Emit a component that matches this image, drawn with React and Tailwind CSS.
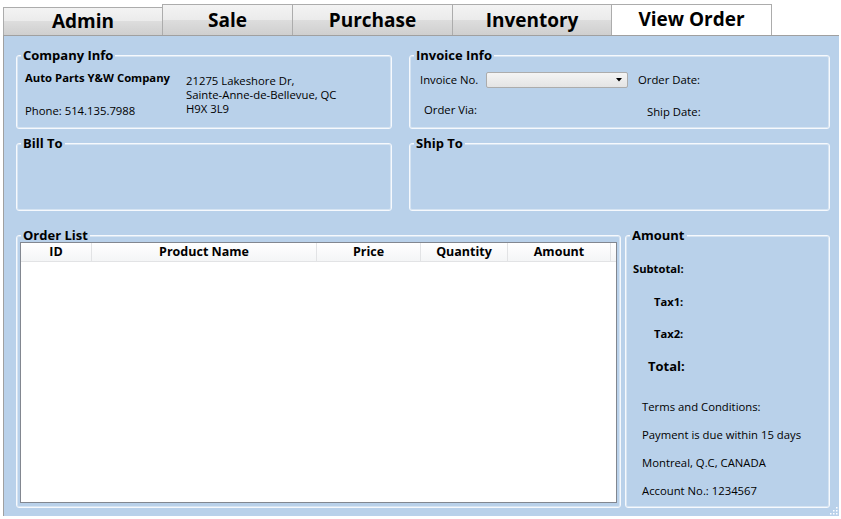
import React from 'react';

const tabs = [
  { label: 'Admin', w: 'w-[160px]', h: 'h-[28px]', first: true },
  { label: 'Sale', w: 'w-[131px]', h: 'h-[31px]' },
  { label: 'Purchase', w: 'w-[161px]', h: 'h-[31px]' },
  { label: 'Inventory', w: 'w-[160px]', h: 'h-[31px]' },
  { label: 'View Order', w: 'w-[161px]', h: 'h-[31px]', active: true },
];

const columns = [
  { label: 'ID', w: 'w-[71px]' },
  { label: 'Product Name', w: 'w-[225px]' },
  { label: 'Price', w: 'w-[104px]' },
  { label: 'Quantity', w: 'w-[87px]' },
  { label: 'Amount', w: 'w-[103px]' },
];

// WPF-ish group box: white double border with the header sitting on the top line
const GroupBox = ({ title, className = '', children }) => (
  <fieldset
    className={`min-w-0 border border-[#f6f9fd] rounded-[3px] shadow-[inset_0_0_0_1px_#d6e4f2] ${className}`}
  >
    <legend className="ml-[4px] px-[2px] bg-[#b9d1ea] text-[13px] font-bold leading-[14px] text-black">
      {title}
    </legend>
    {children}
  </fieldset>
);

export default function App() {
  return (
    <div className="w-[841px] h-[519px] bg-white overflow-hidden font-['Open_Sans',_'DejaVu_Sans',_sans-serif] text-black">
      {/* Tab strip */}
      <div className="flex items-end h-[35px] pl-[3px]">
        {tabs.map((t) => (
          <div
            key={t.label}
            className={`${t.w} ${t.h} ${t.first ? '' : '-ml-px'} flex items-center justify-center border border-b-0 border-[#acacac] text-[19px] font-bold leading-none ${
              t.active
                ? 'bg-white pb-[2px]'
                : 'bg-[linear-gradient(#f3f3f3_0%,#ebebeb_50%,#dddddd_50%,#cfcfcf_100%)]'
            }`}
          >
            {t.label}
          </div>
        ))}
      </div>

      {/* Tab content */}
      <div className="relative ml-[3px] w-[836px] h-[481px] bg-[#b9d1ea] border-t border-l border-[#a0a0a0] pl-[12px] pt-[12px]">
        {/* Row 1 */}
        <div className="flex gap-[17px]">
          <GroupBox title="Company Info" className="w-[376px] h-[81px]">
            <div className="flex pl-[8px] pt-[8px] text-[11.3px] leading-[15px]">
              <div className="w-[161px] flex flex-col">
                <span className="font-bold">Auto Parts Y&amp;W Company</span>
                <span className="mt-[18px]">Phone: 514.135.7988</span>
              </div>
              <div className="flex flex-col pt-[4px] leading-[14px]">
                <span>21275 Lakeshore Dr,</span>
                <span>Sainte-Anne-de-Bellevue, QC</span>
                <span>H9X 3L9</span>
              </div>
            </div>
          </GroupBox>

          <GroupBox title="Invoice Info" className="w-[421px] h-[81px]">
            <div className="pl-[10px] pt-[10px] text-[11.3px] leading-[16px]">
              <div className="flex items-center">
                <span className="w-[66px]">Invoice No.</span>
                <div className="relative w-[142px] h-[16px] border border-[#acacac] rounded-[2px] bg-[linear-gradient(#f4f4f4,#e4e4e4)]">
                  <svg className="absolute right-[5px] top-[5px]" width="6" height="4" viewBox="0 0 6 4">
                    <path d="M0 0 H6 L3 3.5 Z" fill="#000" />
                  </svg>
                </div>
                <span className="ml-[10px]">Order Date:</span>
              </div>
              <div className="flex items-start mt-[14px] pl-[4px]">
                <span className="w-[223px]">Order Via:</span>
                <span className="mt-[2px]">Ship Date:</span>
              </div>
            </div>
          </GroupBox>
        </div>

        {/* Row 2 */}
        <div className="flex gap-[17px] mt-[7px]">
          <GroupBox title="Bill To" className="w-[376px] h-[75px]" />
          <GroupBox title="Ship To" className="w-[421px] h-[75px]" />
        </div>

        {/* Row 3 */}
        <div className="flex gap-[4px] mt-[17px]">
          <GroupBox title="Order List" className="w-[605px] h-[280px]">
            <div className="px-[3px]">
              <div className="w-[597px] h-[261px] bg-white border border-[#828790]">
                <div className="flex h-[19px] bg-[linear-gradient(#ffffff,#f4f5f6)] border-b border-[#e2e3e5]">
                  {columns.map((c) => (
                    <div
                      key={c.label}
                      className={`${c.w} flex items-center justify-center border-r border-[#e2e3e5] text-[12.5px] font-bold leading-none`}
                    >
                      {c.label}
                    </div>
                  ))}
                </div>
              </div>
            </div>
          </GroupBox>

          <GroupBox title="Amount" className="w-[205px] h-[280px]">
            <div className="flex flex-col">
              <span className="mt-[19px] pl-[7px] text-[11.2px] font-bold leading-[16px]">Subtotal:</span>
              <span className="mt-[17px] pl-[28px] text-[11.2px] font-bold leading-[16px]">Tax1:</span>
              <span className="mt-[16px] pl-[28px] text-[11.2px] font-bold leading-[16px]">Tax2:</span>
              <span className="mt-[15px] pl-[22px] text-[13px] font-bold leading-[18px]">Total:</span>
              <span className="mt-[24px] pl-[16px] text-[11.3px] leading-[16px]">Terms and Conditions:</span>
              <span className="mt-[12px] pl-[16px] text-[11.3px] leading-[16px]">Payment is due within 15 days</span>
              <span className="mt-[12px] pl-[16px] text-[11.3px] leading-[16px]">Montreal, Q.C, CANADA</span>
              <span className="mt-[12px] pl-[16px] text-[11.3px] leading-[16px]">Account No.: 1234567</span>
            </div>
          </GroupBox>
        </div>

        {/* resize grip */}
        <svg className="absolute right-[1px] bottom-[1px]" width="9" height="9" viewBox="0 0 9 9">
          {[
            [7, 1], [7, 4], [4, 4], [7, 7], [4, 7], [1, 7],
          ].map(([x, y]) => (
            <rect key={`${x}-${y}`} x={x} y={y} width="1.5" height="1.5" fill="#ffffff" />
          ))}
        </svg>
      </div>
    </div>
  );
}
